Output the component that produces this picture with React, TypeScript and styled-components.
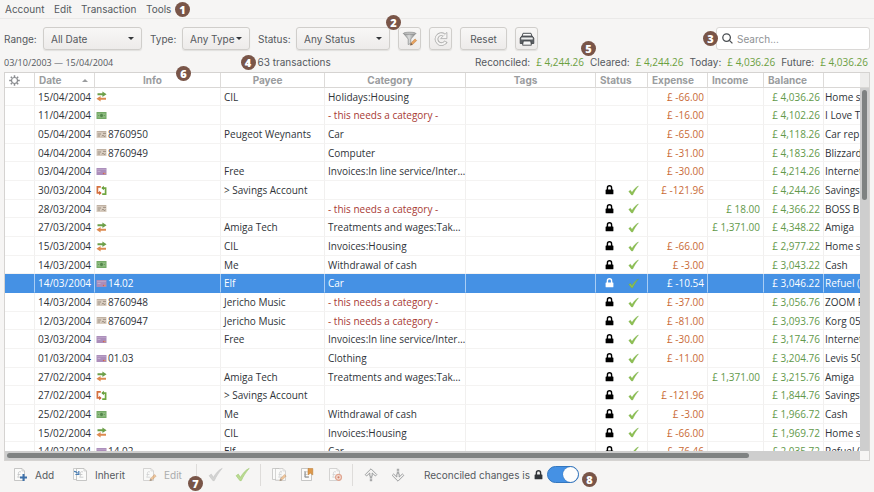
import React from "react";
import styled, { createGlobalStyle, css } from "styled-components";

const Global = createGlobalStyle`
  *, *::before, *::after { box-sizing: border-box; }
  body { margin: 0; background: #f6f5f4; }
  body, button, select, input { font-family: Inter, "Open Sans", sans-serif; font-size: 10px; color: #55595e; }
  button, select, input { margin: 0; }
  svg { display: block; flex: none; }
`;

const Window = styled.main`
  height: 100vh;
  display: flex;
  flex-direction: column;
  overflow: hidden;
  background: #f6f5f4;
`;

const MenuBar = styled.nav`
  display: flex;
  align-items: center;
  gap: 4px;
  height: 19px;
  padding-left: 5px;
  border-bottom: 1px solid #eae9e8;
`;

const MenuButton = styled.button<{ $width: number }>`
  width: ${(p) => p.$width}px;
  padding: 0;
  border: 0;
  background: none;
  text-align: left;
  line-height: 16px;
`;

const Badge = styled.span<{ $left?: number; $right?: number; $top: number }>`
  position: absolute;
  z-index: 2;
  ${(p) => (p.$right !== undefined ? css`right: ${p.$right}px;` : css`left: ${p.$left}px;`)}
  top: ${(p) => p.$top}px;
  width: 15px;
  height: 15px;
  border-radius: 50%;
  background: #795548;
  color: #fff;
  font-family: "Open Sans", sans-serif;
  font-size: 11px;
  font-weight: 800;
  line-height: 15px;
  text-align: center;
`;

const Anchor = styled.div`
  position: relative;
  display: flex;
  align-items: center;
`;

const FilterBar = styled.section`
  display: flex;
  align-items: center;
  gap: 8px;
  height: 35px;
  padding: 4px 4px 0;
`;

const Field = styled.label<{ $caption: number }>`
  display: grid;
  grid-template-columns: ${(p) => p.$caption}px auto;
  align-items: center;
`;

const Combo = styled.span<{ $width: number }>`
  position: relative;
  width: ${(p) => p.$width}px;
  svg { position: absolute; right: 8px; top: 10px; pointer-events: none; }
`;

const raised = css`
  height: 23px;
  border: 1px solid #d0cecb;
  border-radius: 3px;
  background: linear-gradient(#f8f7f6, #edebea);
  box-shadow: 0 1px 1px #e2e0de;
`;

const Select = styled.select`
  ${raised}
  display: block;
  appearance: none;
  width: 100%;
  padding: 0 3px 0 7px;
`;

const Button = styled.button<{ $width?: number }>`
  ${raised}
  display: flex;
  align-items: center;
  justify-content: center;
  width: ${(p) => p.$width ?? 23}px;
  padding: 0;
`;

const Search = styled.label`
  display: flex;
  align-items: center;
  gap: 4px;
  width: 154px;
  height: 23px;
  padding-left: 5px;
  border: 1px solid #dad8d6;
  border-radius: 3px;
  background: #fff;
  input { flex: 1; min-width: 0; border: 0; padding: 0; outline: 0; background: none; }
  input::placeholder { color: #8e9194; opacity: 1; }
`;

const Spacer = styled.div`
  flex: 1;
`;

const Summary = styled.section`
  display: flex;
  align-items: center;
  justify-content: space-between;
  height: 18px;
  padding: 0 6px 2px 4px;
`;

const Period = styled.span`
  font-family: "Open Sans", sans-serif;
  font-size: 9px;
`;

const Totals = styled.dl`
  display: flex;
  gap: 6px;
  margin: 0;
  div { display: flex; align-items: baseline; gap: 6px; }
  dt, dd { margin: 0; }
  dd { color: #6ba03f; font-family: "Open Sans", sans-serif; }
`;

const Frame = styled.section`
  position: relative;
  flex: 1;
  min-height: 0;
  margin: 0 4px;
  border: 1px solid #d5d3d1;
  display: grid;
  grid-template-columns: minmax(0, 1fr) 9px;
  grid-template-rows: minmax(0, 1fr) 9px;
  background: #f6f5f4;
`;

const Viewport = styled.div`
  overflow: hidden;
  background: #fff;
`;

const Ledger = styled.table`
  table-layout: fixed;
  border-collapse: separate;
  border-spacing: 0;
  width: max(1000px, 120%);
`;

const Head = styled.th<{ $centered?: boolean }>`
  height: 15px;
  padding: 0 ${(p) => (p.$centered ? 14 : 4)}px 0 4px;
  border-right: 1px solid #dddbd9;
  border-bottom: 1px solid #d9d7d5;
  color: #9a9c9e;
  font-weight: 700;
  line-height: 14px;
  text-align: ${(p) => (p.$centered ? "center" : "left")};
`;

const SortLabel = styled.span`
  display: flex;
  align-items: center;
  justify-content: space-between;
  padding-right: 2px;
`;

const Row = styled.tr<{ $selected: boolean }>`
  height: 19px;
  &:nth-child(3n + 1) { height: 18px; }
  ${(p) => p.$selected && css`
    background: #4591e4;
    && td { color: #fff; border-bottom-color: #4591e4; border-right-color: #a9cdf4; }
  `}
`;

const Cell = styled.td<{ $tone?: "in" | "out" | "warn"; $right?: boolean; $icon?: boolean }>`
  padding: 0 3px 0 ${(p) => (p.$icon ? 1 : 3)}px;
  border-right: 1px solid #f1f0ef;
  border-bottom: 1px solid #f4f3f2;
  font-family: "Open Sans", sans-serif;
  line-height: 16px;
  white-space: nowrap;
  overflow: hidden;
  text-align: ${(p) => (p.$right ? "right" : "left")};
  color: ${(p) => ({ in: "#62994a", out: "#c96a35", warn: "#a83a34" })[p.$tone as "in"] ?? "#2f3338"};
`;

const InfoLine = styled.span`
  display: flex;
  align-items: center;
  gap: 1px;
`;

const Marks = styled.span`
  display: flex;
  align-items: center;
  gap: 14px;
  padding-left: 6px;
`;

const VTrack = styled.div`
  display: flex;
  flex-direction: column;
  align-items: center;
  background: #cecece;
  &::before { content: ""; width: 100%; height: 15px; background: #eeedec; border-bottom: 1px solid #d9d7d5; }
  &::after { content: ""; width: 5px; height: 29%; margin-top: 2px; border-radius: 3px; background: #7f8282; }
`;

const HTrack = styled.div`
  display: flex;
  align-items: center;
  padding-left: 2px;
  background: #cecece;
  &::before { content: ""; width: 87%; height: 5px; border-radius: 3px; background: #7f8282; }
`;

const ActionBar = styled.footer`
  display: flex;
  align-items: center;
  height: 31px;
  padding: 0 4px 4px 13px;
`;

const Action = styled.button<{ $width: number }>`
  display: flex;
  align-items: center;
  gap: 7px;
  width: ${(p) => p.$width}px;
  height: 24px;
  padding: 0;
  border: 0;
  background: none;
  &:disabled { color: #aaacad; }
`;

const Divider = styled.div`
  width: 1px;
  height: 22px;
  margin-right: 11px;
  background: #dedcda;
`;

const LockState = styled.label`
  display: flex;
  align-items: center;
  gap: 4px;
  margin-left: 11px;
`;

const Switch = styled.input`
  appearance: none;
  display: flex;
  width: 32px;
  height: 17px;
  border: 1px solid #3477bf;
  border-radius: 9px;
  background: #4591e4;
  &::after { content: ""; width: 15px; height: 15px; border-radius: 50%; background: #fdfdfd; box-shadow: 0 0 1px #2c5e98; }
  &:checked { justify-content: flex-end; }
`;

/* ---------- drawings ---------- */

const Triangle = ({ up }: { up?: boolean }) => (
  <svg width="6" height="3" viewBox="0 0 6 3"><path d={up ? "M0 3L3 0L6 3Z" : "M0 0H6L3 3Z"} fill={up ? "#9a9c9e" : "#34373a"} /></svg>
);

const Gear = () => (
  <svg width="11" height="11" viewBox="0 0 11 11" fill="none" stroke="#8b8d90">
    <circle cx="5.5" cy="5.5" r="3" strokeWidth="1.2" />
    <path d="M5.5 0.2V2M5.5 9V10.8M0.2 5.5H2M9 5.5H10.8M1.8 1.8L3 3M8 8L9.2 9.2M9.2 1.8L8 3M3 8L1.8 9.2" strokeWidth="1.5" />
  </svg>
);

const Pencil = ({ x, y }: { x: number; y: number }) => (
  <g transform={`translate(${x} ${y})`}>
    <path d="M0.3 6.7L1 4.4L5 0.4L6.7 2L2.6 6.1Z" fill="#e7a35f" stroke="#bb7738" strokeWidth=".5" />
    <path d="M0.3 6.7L1 4.4L2.6 6.1Z" fill="#5e5e5e" />
  </g>
);

const FilterIcon = () => (
  <svg width="16" height="16" viewBox="0 0 16 16">
    <defs><linearGradient id="funnel"><stop offset="0" stopColor="#8d8f8f" /><stop offset=".45" stopColor="#dcdddd" /><stop offset="1" stopColor="#7d7f7f" /></linearGradient></defs>
    <path d="M1.5 2.5L6.2 8V13.6L8.8 12.4V8L13.7 2.5Z" fill="url(#funnel)" stroke="#878989" strokeWidth=".7" />
    <ellipse cx="7.6" cy="2.4" rx="6.3" ry="1.2" fill="#bcbdbd" stroke="#858787" strokeWidth=".6" />
    <Pencil x={8} y={7.5} />
  </svg>
);

const RefreshIcon = () => (
  <svg width="16" height="16" viewBox="0 0 16 16" fill="none">
    <path d="M13 10.4A5 5 0 1 1 11 3.8" stroke="#aaaaa9" strokeWidth="3.6" />
    <path d="M13.9 1.4V7.6H7.6Z" fill="#f7f6f5" stroke="#aaaaa9" strokeWidth=".8" />
    <path d="M12.6 10.9A5 5 0 1 1 11.2 4" stroke="#f5f4f3" strokeWidth="2" />
  </svg>
);

const PrinterIcon = () => (
  <svg width="16" height="16" viewBox="0 0 16 16">
    <path d="M3 5.5L4 2.3H12L13 5.5Z" fill="#fdfdfd" stroke="#4c5054" />
    <path d="M1.2 7L2.8 5H13.2L14.8 7V12.5H1.2Z" fill="#5c6064" stroke="#3c4044" strokeWidth=".8" strokeLinejoin="round" />
    <rect x="2.2" y="6.6" width="11.6" height="2" rx=".6" fill="#eceded" />
    <path d="M4.3 10H11.7L12.4 14.2H3.6Z" fill="#f6f6f6" stroke="#33363a" strokeWidth=".8" />
  </svg>
);

const SearchIcon = () => (
  <svg width="11" height="11" viewBox="0 0 11 11" fill="none" stroke="#4c5054" strokeWidth="1.3"><circle cx="4.6" cy="4.6" r="3.8" /><path d="M7.4 7.4L10.4 10.4" /></svg>
);

const TickIcon = ({ size = 11, tone = "#6fa83c", light = "#8fc052" }) => (
  <svg width={size} height={size} viewBox="0 0 11 11">
    <path d="M0.8 6.4L2.4 5.2L4 7.6C5.6 4.8 7.6 2.3 10.4 1C8.2 3.6 6.2 6.6 4.6 10H3.6Z" fill={light} stroke={tone} strokeWidth=".4" strokeLinejoin="round" />
  </svg>
);

const LockIcon = ({ color = "#000" }) => (
  <svg width="9" height="10" viewBox="0 0 9 10"><path d="M2.4 5V2.9A2.1 2.1 0 0 1 6.6 2.9V5" fill="none" stroke={color} strokeWidth="1.4" /><rect x=".6" y="4.6" width="7.8" height="4.6" rx=".5" fill={color} /></svg>
);

type Kind = "order" | "cash" | "cheque" | "card" | "transfer";

const KindIcon = ({ kind }: { kind: Kind }) => (
  <svg width="11" height="11" viewBox="0 0 11 11">
    {kind === "order" && (
      <>
        <path d="M1.5 2.2H6.4V0.4L10.6 3.2L6.4 6V4.2H1.5Z" fill="#6c9f48" />
        <path d="M10 6.8H4.6V5L0.4 7.8L4.6 10.6V8.8H10Z" fill="#dd8a50" />
      </>
    )}
    {kind === "cash" && (
      <>
        <rect x=".5" y="2" width="10" height="7" fill="#74a966" />
        <path d="M1.5 3.2H9.5V7.8H1.5Z" fill="#8dbb80" />
        <ellipse cx="5.5" cy="5.5" rx="1.5" ry="1.8" fill="#54874c" />
        <path d="M2.4 5.5H3.2M7.8 5.5H8.6" stroke="#54874c" />
      </>
    )}
    {kind === "cheque" && (
      <>
        <rect x=".5" y="2" width="10" height="7" fill="#d9cdc0" />
        <path d="M1 2.6H10" stroke="#bcae9f" />
        <path d="M1.5 5H5M1.5 7H4M6 7.4L7 6L8 7.6L9.8 6.8M7 4.4H10" stroke="#85786b" strokeWidth=".7" fill="none" />
      </>
    )}
    {kind === "card" && (
      <>
        <rect x=".5" y="2" width="10" height="7" fill="#ab8dba" />
        <path d="M1 3.4H10" stroke="#bba3c7" />
        <path d="M1.6 5.4H4.5" stroke="#c5b1cf" />
        <circle cx="7.6" cy="7.5" r=".8" fill="#cf5a62" /><circle cx="8.8" cy="7.5" r=".8" fill="#dd9a5c" />
      </>
    )}
    {kind === "transfer" && (
      <>
        <path d="M4.8 1.8H1.4V7.8H3.6" fill="none" stroke="#d5713f" strokeWidth="1.7" /><path d="M3.2 5.8V10.2L5.6 8Z" fill="#c85a2a" />
        <path d="M6.2 9.2H9.6V3.2H7.4" fill="none" stroke="#6fa640" strokeWidth="1.7" /><path d="M7.8 0.8V5.2L5.4 3Z" fill="#5e9632" />
      </>
    )}
  </svg>
);

const Sheet = ({ x = 2, dim }: { x?: number; dim?: boolean }) => (
  <g transform={`translate(${x} 1)`} opacity={dim ? 0.7 : 1}>
    <path d="M0.5 0.5H8L10.5 3V12.5H0.5Z" fill="#fbfbfa" stroke="#b9b9b7" strokeWidth=".8" />
    <path d="M8 0.5V3H10.5" fill="none" stroke="#c6c6c4" strokeWidth=".7" />
    <path d="M7 4.2C6.2 3.2 4.4 3.5 4.4 5.2C4.4 6.8 4.8 8 3.6 9.2H7.4M3.5 6.5H6.4" fill="none" stroke="#c0c2c3" strokeWidth=".8" />
  </g>
);

type Glyph = "add" | "inherit" | "edit" | "multi" | "bookmark" | "remove";

const SheetIcon = ({ glyph }: { glyph: Glyph }) => (
  <svg width="15" height="15" viewBox="0 0 15 15">
    {(glyph === "inherit" || glyph === "multi") && <path d="M.5 1.5H7L9 3.5V12.5H.5Z" fill="#fbfbfa" stroke="#c2c2c0" strokeWidth=".8" />}
    <Sheet x={glyph === "inherit" || glyph === "multi" ? 3 : 1} dim={glyph === "edit" || glyph === "multi" || glyph === "remove"} />
    {glyph === "add" && <path d="M7 10.5H14M10.5 7V14" stroke="#3d70aa" strokeWidth="2" />}
    {glyph === "inherit" && <path d="M1 4.4C2 4.4 3.4 4.6 4.6 6.4M2.4 7.5H5.8V4" fill="none" stroke="#4b7eb3" strokeWidth="1.2" />}
    {(glyph === "edit" || glyph === "multi") && <g opacity=".6"><Pencil x={7.5} y={7} /></g>}
    {glyph === "bookmark" && <><path d="M5 4V10H9" fill="none" stroke="#8a8c8d" /><path d="M8 1.5H12.8V8L10.4 6.2L8 8Z" fill="#dd984a" stroke="#b87830" strokeWidth=".5" /></>}
    {glyph === "remove" && <><circle cx="10.5" cy="10.3" r="3" fill="#f6ded4" stroke="#e0a590" strokeWidth="1.2" /><circle cx="10.5" cy="10.3" r="1.1" fill="#d0806a" /></>}
  </svg>
);

const ArrowIcon = ({ down }: { down?: boolean }) => (
  <svg width="14" height="14" viewBox="0 0 14 14" fill="none" stroke="#949697" strokeWidth=".9">
    <g transform={down ? "rotate(180 7 7)" : undefined}>
      <path d="M7 .8L12.8 6.6L11.4 8L8.2 5V8.3H5.8V5L2.6 8L1.2 6.6Z" fill="#f3f2f1" />
      <path d="M5.8 9.7H8.2M5.8 11.2H8.2M5.8 12.7H8.2" strokeWidth="1" />
    </g>
  </svg>
);

/* ---------- data ---------- */

interface Entry {
  date: string;
  kind: Kind;
  info?: string;
  payee?: string;
  category?: string;
  expense?: string;
  income?: string;
  balance: string;
  memo: string;
}

const NEEDS = "- this needs a category -";
const LINE = "Invoices:In line service/Inter…";
const WAGES = "Treatments and wages:Tak…";

const entries: Entry[] = [
  { date: "15/04/2004", kind: "order", payee: "CIL", category: "Holidays:Housing", expense: "-66.00", balance: "4,036.26", memo: "Home s" },
  { date: "11/04/2004", kind: "cash", category: NEEDS, expense: "-16.00", balance: "4,102.26", memo: "I Love T" },
  { date: "05/04/2004", kind: "cheque", info: "8760950", payee: "Peugeot Weynants", category: "Car", expense: "-65.00", balance: "4,118.26", memo: "Car rep" },
  { date: "04/04/2004", kind: "cheque", info: "8760949", category: "Computer", expense: "-31.00", balance: "4,183.26", memo: "Blizzard" },
  { date: "03/04/2004", kind: "card", payee: "Free", category: LINE, expense: "-30.00", balance: "4,214.26", memo: "Internet" },
  { date: "30/03/2004", kind: "transfer", payee: "> Savings Account", expense: "-121.96", balance: "4,244.26", memo: "Savings" },
  { date: "28/03/2004", kind: "cheque", category: NEEDS, income: "18.00", balance: "4,366.22", memo: "BOSS B" },
  { date: "27/03/2004", kind: "order", payee: "Amiga Tech", category: WAGES, income: "1,371.00", balance: "4,348.22", memo: "Amiga" },
  { date: "15/03/2004", kind: "order", payee: "CIL", category: "Invoices:Housing", expense: "-66.00", balance: "2,977.22", memo: "Home s" },
  { date: "14/03/2004", kind: "cash", payee: "Me", category: "Withdrawal of cash", expense: "-3.00", balance: "3,043.22", memo: "Cash" },
  { date: "14/03/2004", kind: "card", info: "14.02", payee: "Elf", category: "Car", expense: "-10.54", balance: "3,046.22", memo: "Refuel (" },
  { date: "14/03/2004", kind: "cheque", info: "8760948", payee: "Jericho Music", category: NEEDS, expense: "-37.00", balance: "3,056.76", memo: "ZOOM P" },
  { date: "12/03/2004", kind: "cheque", info: "8760947", payee: "Jericho Music", category: NEEDS, expense: "-81.00", balance: "3,093.76", memo: "Korg 05" },
  { date: "03/03/2004", kind: "card", payee: "Free", category: LINE, expense: "-30.00", balance: "3,174.76", memo: "Internet" },
  { date: "01/03/2004", kind: "card", info: "01.03", category: "Clothing", expense: "-11.00", balance: "3,204.76", memo: "Levis 50" },
  { date: "27/02/2004", kind: "order", payee: "Amiga Tech", category: WAGES, income: "1,371.00", balance: "3,215.76", memo: "Amiga" },
  { date: "27/02/2004", kind: "transfer", payee: "> Savings Account", expense: "-121.96", balance: "1,844.76", memo: "Savings" },
  { date: "25/02/2004", kind: "cash", payee: "Me", category: "Withdrawal of cash", expense: "-3.00", balance: "1,966.72", memo: "Cash" },
  { date: "15/02/2004", kind: "order", payee: "CIL", category: "Invoices:Housing", expense: "-66.00", balance: "1,969.72", memo: "Home s" },
  { date: "14/02/2004", kind: "card", info: "14.02", payee: "Elf", category: "Car", expense: "-76.46", balance: "2,035.72", memo: "Refuel (" },
];

const totals = [["Reconciled:", "£ 4,244.26"], ["Cleared:", "£ 4,244.26"], ["Today:", "£ 4,036.26"], ["Future:", "£ 4,036.26"]];
const SELECTED = 10;
const FIRST_RECONCILED = 5;

const Column = styled.col<{ $width?: number }>`
  width: ${(p) => (p.$width ? `${p.$width}px` : "auto")};
`;

const widths = [30, 60, 126, 104, 141, 130, 52, 60, 56, 60];

const Picker = ({ caption, captionWidth, width, value }: { caption: string; captionWidth: number; width: number; value: string }) => (
  <Field $caption={captionWidth}>
    {caption}
    <Combo $width={width}>
      <Select defaultValue={value}><option>{value}</option></Select>
      <Triangle />
    </Combo>
  </Field>
);

export default function App() {
  return (
    <Window>
      <Global />
      <MenuBar>
        <MenuButton $width={45}>Account</MenuButton>
        <MenuButton $width={23}>Edit</MenuButton>
        <MenuButton $width={61}>Transaction</MenuButton>
        <Anchor>
          <MenuButton $width={28}>Tools</MenuButton>
          <Badge $left={29} $top={1}>1</Badge>
        </Anchor>
      </MenuBar>

      <FilterBar>
        <Picker caption="Range:" captionWidth={39} width={99} value="All Date" />
        <Picker caption="Type:" captionWidth={32} width={68} value="Any Type" />
        <Anchor>
          <Picker caption="Status:" captionWidth={38} width={94} value="Any Status" />
          <Badge $right={-11} $top={-12}>2</Badge>
        </Anchor>
        <Button aria-label="Edit filter"><FilterIcon /></Button>
        <Button aria-label="Refresh" disabled><RefreshIcon /></Button>
        <Button $width={47}>Reset</Button>
        <Button aria-label="Print"><PrinterIcon /></Button>
        <Spacer />
        <Anchor>
          <Search><SearchIcon /><input type="search" aria-label="Search" placeholder="Search..." /></Search>
          <Badge $left={-13} $top={4}>3</Badge>
        </Anchor>
      </FilterBar>

      <Summary>
        <Period>03/10/2003 — 15/04/2004</Period>
        <Anchor><Badge $left={-17} $top={-1}>4</Badge>63 transactions</Anchor>
        <Anchor>
          <Totals>
            {totals.map(([name, amount]) => <div key={name}><dt>{name}</dt><dd>{amount}</dd></div>)}
          </Totals>
          <Badge $left={106} $top={-14}>5</Badge>
        </Anchor>
      </Summary>

      <Frame>
        <Badge $left={171} $top={-7}>6</Badge>
        <Viewport>
          <Ledger>
            <colgroup>
              {widths.map((w, i) => <Column key={i} $width={w} />)}
              <Column />
            </colgroup>
            <thead>
              <tr>
                <Head aria-label="Settings"><Gear /></Head>
                <Head><SortLabel>Date <Triangle up /></SortLabel></Head>
                <Head $centered>Info</Head>
                <Head $centered>Payee</Head>
                <Head $centered>Category</Head>
                <Head $centered>Tags</Head>
                <Head>Status</Head>
                <Head>Expense</Head>
                <Head>Income</Head>
                <Head>Balance</Head>
                <Head aria-label="Memo" />
              </tr>
            </thead>
            <tbody>
              {entries.map((e, i) => (
                <Row key={i} $selected={i === SELECTED}>
                  <Cell />
                  <Cell $right>{e.date}</Cell>
                  <Cell $icon><InfoLine><KindIcon kind={e.kind} />{e.info}</InfoLine></Cell>
                  <Cell>{e.payee}</Cell>
                  <Cell $tone={e.category === NEEDS ? "warn" : undefined}>{e.category}</Cell>
                  <Cell />
                  <Cell>{i >= FIRST_RECONCILED && <Marks><LockIcon color={i === SELECTED ? "#fff" : "#000"} /><TickIcon /></Marks>}</Cell>
                  <Cell $right $tone="out">{e.expense && `£ ${e.expense}`}</Cell>
                  <Cell $right $tone="in">{e.income && `£ ${e.income}`}</Cell>
                  <Cell $right $tone="in">£ {e.balance}</Cell>
                  <Cell $icon>{e.memo}</Cell>
                </Row>
              ))}
            </tbody>
          </Ledger>
        </Viewport>
        <VTrack />
        <HTrack />
      </Frame>

      <ActionBar>
        <Action $width={60}><SheetIcon glyph="add" />Add</Action>
        <Action $width={69}><SheetIcon glyph="inherit" />Inherit</Action>
        <Anchor>
          <Action $width={54} disabled><SheetIcon glyph="edit" />Edit</Action>
          <Badge $left={46} $top={13}>7</Badge>
        </Anchor>
        <Divider />
        <Action $width={27} aria-label="Clear" disabled><TickIcon size={15} tone="#c4c4c3" light="#d3d3d2" /></Action>
        <Action $width={25} aria-label="Reconcile"><TickIcon size={15} tone="#9cc56d" light="#bbdb93" /></Action>
        <Divider />
        <Action $width={28} aria-label="Edit several" disabled><SheetIcon glyph="multi" /></Action>
        <Action $width={28} aria-label="Create template"><SheetIcon glyph="bookmark" /></Action>
        <Action $width={24} aria-label="Delete" disabled><SheetIcon glyph="remove" /></Action>
        <Divider />
        <Action $width={27} aria-label="Move up" disabled><ArrowIcon /></Action>
        <Action $width={22} aria-label="Move down" disabled><ArrowIcon down /></Action>
        <Anchor>
          <LockState>
            Reconciled changes is
            <LockIcon color="#33363a" />
            <Switch type="checkbox" role="switch" defaultChecked />
          </LockState>
          <Badge $right={-18} $top={6}>8</Badge>
        </Anchor>
      </ActionBar>
    </Window>
  );
}
